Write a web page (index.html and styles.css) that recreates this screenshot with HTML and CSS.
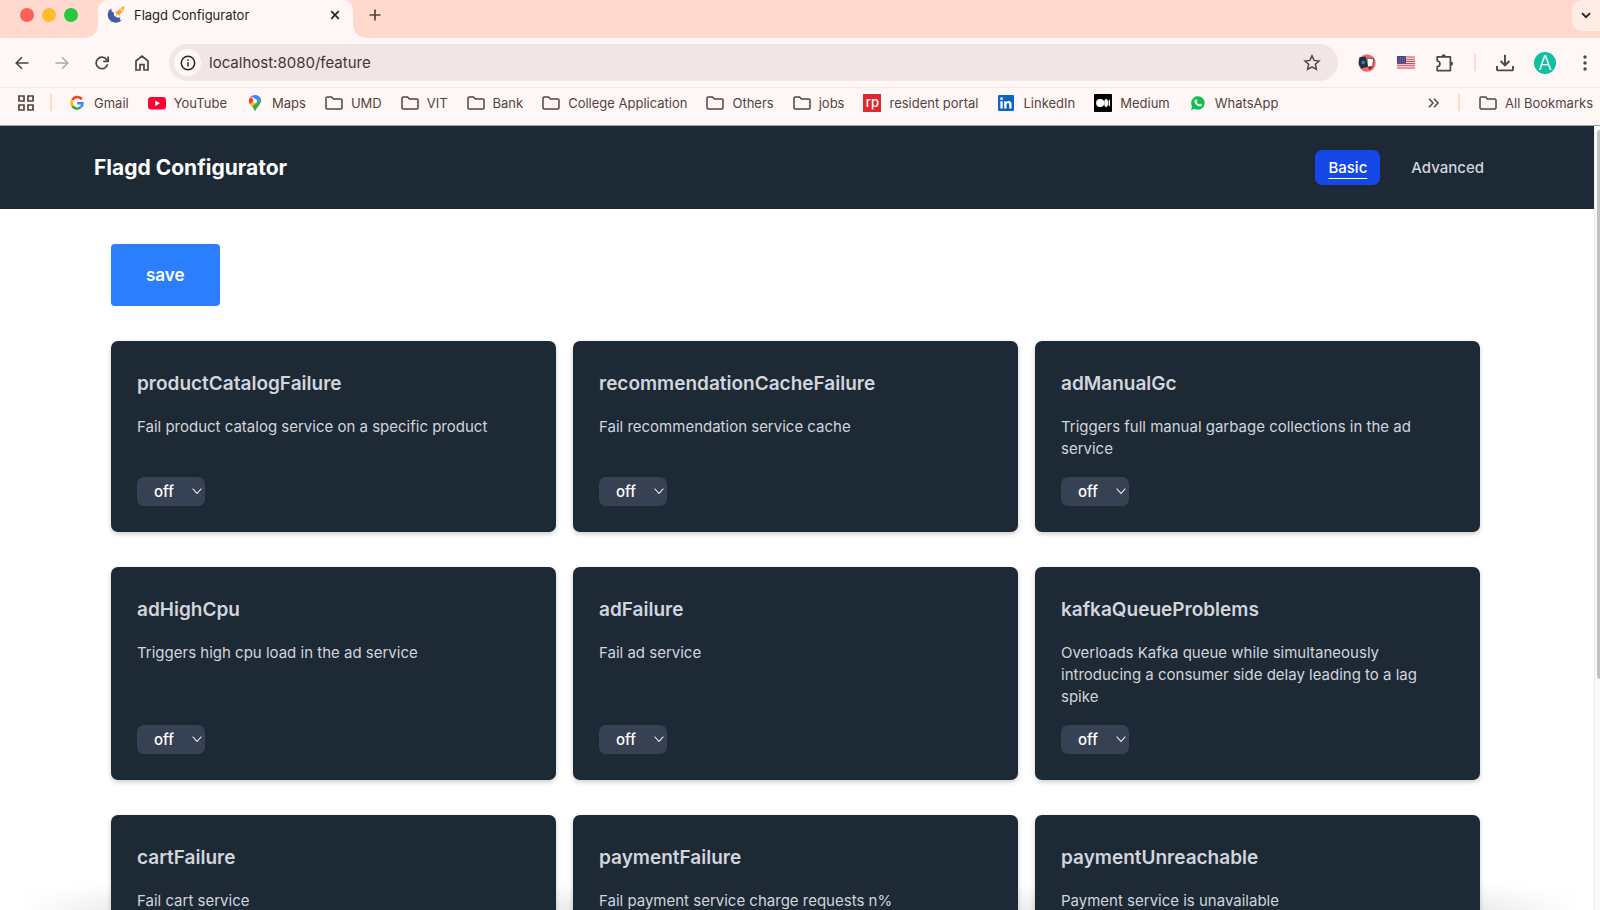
FILE: index.html
```html
<!DOCTYPE html>
<html lang="en">
<head>
<meta charset="utf-8">
<title>Flagd Configurator</title>
<link rel="stylesheet" href="styles.css">
</head>
<body>
<svg class="defs" aria-hidden="true">
  <symbol id="folder" viewBox="0 0 18 14"><path d="M1 2.2Q1 1 2.2 1H6.6L8.4 2.9H15.8Q17 2.9 17 4.1V11.8Q17 13 15.8 13H2.2Q1 13 1 11.8Z" fill="none" stroke="currentColor" stroke-width="1.5" stroke-linejoin="round"/></symbol>
  <symbol id="chevron" viewBox="0 0 10 7"><path d="M1 1L5 5.5L9 1" fill="none" stroke="currentColor" stroke-width="1.1" stroke-linecap="round" stroke-linejoin="round"/></symbol>
</svg>

<div class="tabstrip">
  <div class="lights"><span class="light red"></span><span class="light yellow"></span><span class="light green"></span></div>
  <div class="tab">
    <svg class="favicon" viewBox="0 0 18 18"><path d="M4.2 2.2A8 8 0 1 0 15.2 13.5L12.8 14.2L13.2 11.3L10.5 11.8L7.2 9.8L6.6 6.3L4.6 5.6Z" fill="#4459a8"/><path d="M3 17L7 11L8.3 12.4Z" fill="#4459a8"/><path d="M8.2 6.6L12 3.8Q14 1.2 17.6.3Q17.3 3.9 14.6 6.2L12.2 10L10.9 8.3L8.8 10.2L9.5 7.4Z" fill="#f9a52b"/><circle cx="14.4" cy="3.7" r="1.1" fill="#ffe1a6"/></svg>
    <span class="tab-title">Flagd Configurator</span>
    <button class="icon-btn" aria-label="Close tab"><svg width="10" height="10" viewBox="0 0 10 10"><path d="M1.2 1.2L8.8 8.8M8.8 1.2L1.2 8.8" stroke="#2b2020" stroke-width="1.7"/></svg></button>
  </div>
  <button class="icon-btn new-tab" aria-label="New tab"><svg width="12" height="12" viewBox="0 0 12 12"><path d="M6 .5V11.5M.5 6H11.5" stroke="#54433f" stroke-width="1.7"/></svg></button>
  <button class="icon-btn tab-search" aria-label="Search tabs"><svg width="10" height="7" viewBox="0 0 10 7"><path d="M1 1.2L5 5.2L9 1.2" fill="none" stroke="#2b2020" stroke-width="1.9"/></svg></button>
</div>

<div class="toolbar">
  <div class="nav-btns">
    <button class="icon-btn" aria-label="Back"><svg width="14" height="14" viewBox="0 0 14 14"><path d="M13.5 7H1.5M7 1.2L1.2 7L7 12.8" fill="none" stroke="#54433f" stroke-width="1.6"/></svg></button>
    <button class="icon-btn" aria-label="Forward"><svg width="14" height="14" viewBox="0 0 14 14"><path d="M.5 7H12.5M7 1.2L12.8 7L7 12.8" fill="none" stroke="#b3a9a6" stroke-width="1.6"/></svg></button>
    <button class="icon-btn" aria-label="Reload"><svg width="14" height="14" viewBox="0 0 14 14"><path d="M12.6 8.3A5.8 5.8 0 1 1 11.6 3.4L13 5" fill="none" stroke="#54433f" stroke-width="1.7"/><path d="M13.2 .4V5.4H8.2" fill="none" stroke="#54433f" stroke-width="1.7"/></svg></button>
    <button class="icon-btn" aria-label="Home"><svg width="14" height="16" viewBox="0 0 14 16"><path d="M1 6L7 1.2L13 6V15H9V9.6H5V15H1Z" fill="none" stroke="#54433f" stroke-width="1.7"/></svg></button>
  </div>
  <div class="address">
    <button class="site-info" aria-label="Site information"><svg width="16" height="16" viewBox="0 0 16 16"><circle cx="8" cy="8" r="6.7" fill="none" stroke="#2f2523" stroke-width="1.5"/><path d="M8 7.2V11.5M8 4.4V5.9" stroke="#2f2523" stroke-width="1.5"/></svg></button>
    <input class="url" type="text" aria-label="Address" value="localhost:8080/feature">
    <button class="icon-btn" aria-label="Bookmark this page"><svg width="18" height="17" viewBox="0 0 18 17"><path d="M9 1.8L11.1 6.4L16.1 7L12.4 10.3L13.4 15.3L9 12.8L4.6 15.3L5.6 10.3L1.9 7L6.9 6.4Z" fill="none" stroke="#54433f" stroke-width="1.5"/></svg></button>
  </div>
  <div class="extensions">
    <button class="icon-btn" aria-label="Extension"><svg width="18" height="18" viewBox="0 0 18 18"><circle cx="9" cy="9" r="8.7" fill="#ee6b66"/><path d="M9 4L15.6 4.8L14.6 12.8L9.4 13Z" fill="#fff" stroke="#453436" stroke-width=".8"/><path d="M1.4 3.3L7.6 2.6L9.8 12.8L3.2 14.4L.8 10Z" fill="#1d2e45"/><circle cx="5.2" cy="8.4" r="1.8" fill="#52769a"/><path d="M10 13L14 12L13.4 14.8L11 16Z" fill="#8e2d35"/></svg></button>
    <button class="icon-btn" aria-label="US flag extension"><svg width="18" height="14" viewBox="0 0 18 14"><rect width="18" height="14" rx="1.5" fill="#f8eef0"/><path d="M0 1H18M0 3.2H18M0 5.4H18M0 7.6H18M0 9.8H18M0 12H18" stroke="#c74958" stroke-width="1.1"/><rect width="9" height="7.6" rx="1" fill="#40437d"/><path d="M1.5 1.8H8M1.5 3.8H8M1.5 5.8H8" stroke="#a9aac9" stroke-width=".8" stroke-dasharray=".8 1"/></svg></button>
    <button class="icon-btn" aria-label="Extensions"><svg width="18" height="18" viewBox="0 0 18 18"><path d="M1.2 2.8H14.4V16.6H1.2V12.6C4.9 12.4 4.9 7.2 1.2 7Z" fill="none" stroke="#54433f" stroke-width="1.7" stroke-linejoin="round"/><path d="M5.6 2.4A2.1 2.1 0 0 1 9.8 2.4ZM14.8 7.4A2.2 2.2 0 0 1 14.8 11.8Z" fill="#54433f"/></svg></button>
    <span class="sep"></span>
    <button class="icon-btn" aria-label="Downloads"><svg width="18" height="18" viewBox="0 0 18 18"><path d="M9 .8V11M4.6 7L9 11.4L13.4 7M1 12V15.4Q1 16.4 2 16.4H16Q17 16.4 17 15.4V12" fill="none" stroke="#54433f" stroke-width="1.9"/></svg></button>
    <button class="avatar" aria-label="Profile">A</button>
    <button class="icon-btn" aria-label="Menu"><svg width="4" height="16" viewBox="0 0 4 16" fill="#54433f"><circle cx="2" cy="2" r="1.7"/><circle cx="2" cy="8" r="1.7"/><circle cx="2" cy="14" r="1.7"/></svg></button>
  </div>
</div>

<nav class="bookmarks" aria-label="Bookmarks">
  <button class="icon-btn" aria-label="Apps"><svg width="16" height="16" viewBox="0 0 16 16" fill="none" stroke="#54433f" stroke-width="1.7"><path d="M1 1H6V6H1ZM10 1H15V6H10ZM1 10H6V15H1ZM10 10H15V15H10Z"/></svg></button>
  <span class="sep apps-sep"></span>
  <a class="bm" href="#"><svg class="bm-icon" viewBox="0 0 18 18" fill="none" stroke-width="2.5"><path d="M13.8 5.3A5.5 5.5 0 0 0 4.4 6" stroke="#ea4335"/><path d="M4.4 6A5.5 5.5 0 0 0 4.4 12" stroke="#fbbc05"/><path d="M4.4 12A5.5 5.5 0 0 0 12.8 13.2" stroke="#34a853"/><path d="M12.8 13.2A5.4 5.4 0 0 0 14.5 9.2H9.2" stroke="#4285f4"/></svg>Gmail</a>
  <a class="bm" href="#"><svg class="bm-icon" viewBox="0 0 18 18"><rect y="3" width="18" height="12.5" rx="3.2" fill="#f03"/><path d="M7.2 6.6L12 9.2L7.2 11.9Z" fill="#fff"/></svg>YouTube</a>
  <a class="bm" href="#"><svg class="bm-icon" viewBox="0 0 18 18"><path d="M9 1A6 6 0 0 1 14.8 5.2L4.4 3.1A6 6 0 0 1 9 1Z" fill="#4285f4"/><path d="M4.4 3.1L9 7L3.9 10.2A6 6 0 0 1 4.4 3.1Z" fill="#ea4335"/><path d="M3.9 10.2L12.5 2.2A6 6 0 0 1 14.8 5.2L6.4 13Z" fill="#fbbc04"/><path d="M14.8 5.2C16 10.2 11.2 11.8 9 17.4C8.5 15.8 7.6 14.3 6.2 12.8Z" fill="#34a853"/><path d="M12.5 2.2A6 6 0 0 1 14.8 5.2L10.7 8.5L8 5Z" fill="#4285f4"/><circle cx="9" cy="7" r="2" fill="#fff"/></svg>Maps</a>
  <a class="bm" href="#"><svg class="bm-icon"><use href="#folder"/></svg>UMD</a>
  <a class="bm" href="#"><svg class="bm-icon"><use href="#folder"/></svg>VIT</a>
  <a class="bm" href="#"><svg class="bm-icon"><use href="#folder"/></svg>Bank</a>
  <a class="bm" href="#"><svg class="bm-icon"><use href="#folder"/></svg>College Application</a>
  <a class="bm" href="#"><svg class="bm-icon"><use href="#folder"/></svg>Others</a>
  <a class="bm" href="#"><svg class="bm-icon"><use href="#folder"/></svg>jobs</a>
  <a class="bm" href="#"><span class="bm-icon rp">rp</span>resident portal</a>
  <a class="bm" href="#"><svg class="bm-icon" viewBox="0 0 18 18"><rect x="1" y="1" width="16" height="16" rx="1.2" fill="#0a66c2"/><path d="M3.4 7.2H5.7V14.5H3.4ZM7.2 7.2H9.4V8.2Q10.2 7 11.7 7Q14.5 7 14.5 10.2V14.5H12.2V10.7Q12.2 9 11 9Q9.5 9 9.5 10.8V14.5H7.2Z" fill="#fff"/><circle cx="4.55" cy="4.7" r="1.35" fill="#fff"/></svg>LinkedIn</a>
  <a class="bm" href="#"><svg class="bm-icon" viewBox="0 0 18 18"><rect width="18" height="18" rx="1" fill="#000"/><circle cx="6.2" cy="9" r="4.1" fill="#fff"/><ellipse cx="12.1" cy="9" rx="1.9" ry="3.9" fill="#fff"/><ellipse cx="15.3" cy="9" rx=".8" ry="3.4" fill="#fff"/></svg>Medium</a>
  <a class="bm" href="#"><svg class="bm-icon" viewBox="0 0 18 18"><path d="M2 16L3 12.4A6.8 6.8 0 1 1 5.7 15Z" fill="#14c04d"/><path d="M6.5 5.4L7.6 5.3L8.4 7.2L7.6 8.2Q8.5 9.9 10.3 10.6L11.2 9.6L13 10.5Q13 12.4 11.1 12.6Q8.8 12.4 7 10.4Q5.2 8.2 5.4 6.7Q5.6 5.8 6.5 5.4Z" fill="#fff"/></svg>WhatsApp</a>
  <button class="icon-btn more" aria-label="More bookmarks"><svg width="11" height="10" viewBox="0 0 11 10"><path d="M1 .8L5 5L1 9.2M6 .8L10 5L6 9.2" fill="none" stroke="#54433f" stroke-width="1.5"/></svg></button>
  <span class="sep"></span>
  <a class="bm" href="#"><svg class="bm-icon"><use href="#folder"/></svg>All Bookmarks</a>
</nav>

<div class="viewport">
  <div class="page">
    <header class="site-header">
      <h1 class="brand">Flagd Configurator</h1>
      <nav class="menu"><a class="menu-link active" href="#">Basic</a><a class="menu-link" href="#">Advanced</a></nav>
    </header>
    <main class="content">
      <button class="save">save</button>
      <div class="cards">
        <section class="card"><h2>productCatalogFailure</h2><p>Fail product catalog service on a specific product</p><div class="picker"><select aria-label="productCatalogFailure"><option>off</option><option>on</option></select><svg class="arrow"><use href="#chevron"/></svg></div></section>
        <section class="card"><h2>recommendationCacheFailure</h2><p>Fail recommendation service cache</p><div class="picker"><select aria-label="recommendationCacheFailure"><option>off</option><option>on</option></select><svg class="arrow"><use href="#chevron"/></svg></div></section>
        <section class="card"><h2>adManualGc</h2><p>Triggers full manual garbage collections in the ad service</p><div class="picker"><select aria-label="adManualGc"><option>off</option><option>on</option></select><svg class="arrow"><use href="#chevron"/></svg></div></section>
        <section class="card"><h2>adHighCpu</h2><p>Triggers high cpu load in the ad service</p><div class="picker"><select aria-label="adHighCpu"><option>off</option><option>on</option></select><svg class="arrow"><use href="#chevron"/></svg></div></section>
        <section class="card"><h2>adFailure</h2><p>Fail ad service</p><div class="picker"><select aria-label="adFailure"><option>off</option><option>on</option></select><svg class="arrow"><use href="#chevron"/></svg></div></section>
        <section class="card"><h2>kafkaQueueProblems</h2><p>Overloads Kafka queue while simultaneously introducing a consumer side delay leading to a lag spike</p><div class="picker"><select aria-label="kafkaQueueProblems"><option>off</option><option>on</option></select><svg class="arrow"><use href="#chevron"/></svg></div></section>
        <section class="card"><h2>cartFailure</h2><p>Fail cart service</p></section>
        <section class="card"><h2>paymentFailure</h2><p>Fail payment service charge requests n%</p></section>
        <section class="card"><h2>paymentUnreachable</h2><p>Payment service is unavailable</p></section>
      </div>
    </main>
  </div>
  <div class="scrollbar"><div class="thumb"></div></div>
</div>
</body>
</html>
```
FILE: styles.css
```css
* { box-sizing: border-box; }
body {
  margin: 0;
  height: 100vh;
  overflow: hidden;
  display: flex;
  flex-direction: column;
  font-family: Inter, "Liberation Sans", sans-serif;
  background: #fff7f5;
}
h1, h2, p { margin: 0; }
a { color: inherit; text-decoration: none; }
button { font: inherit; border: 0; padding: 0; background: none; cursor: pointer; }
svg { display: block; flex: none; }
.defs { position: absolute; width: 0; height: 0; }
.icon-btn { display: grid; place-items: center; flex: none; }

.tabstrip {
  display: flex;
  align-items: center;
  flex: none;
  height: 38px;
  background: #ffd9cd;
  padding-left: 20px;
}
.lights { display: flex; gap: 8px; padding-bottom: 8px; }
.light { width: 14px; height: 14px; border-radius: 50%; }
.red { background: #fe5f57; }
.yellow { background: #febc2e; }
.green { background: #28c840; }
.tab {
  position: relative;
  align-self: stretch;
  display: flex;
  align-items: center;
  gap: 9px;
  width: 255px;
  margin-left: 20px;
  padding: 0 13px 8px 9px;
  border-radius: 10px 10px 0 0;
  background: #fff7f5;
}
.tab::before, .tab::after {
  content: "";
  position: absolute;
  bottom: 0;
  width: 12px;
  height: 12px;
}
.tab::before { left: -12px; background: radial-gradient(circle at 0 0, transparent 11px, #fff7f5 12px); }
.tab::after { right: -12px; background: radial-gradient(circle at 100% 0, transparent 11px, #fff7f5 12px); }
.favicon { width: 18px; height: 18px; }
.tab-title { flex: 1; font-size: 13px; color: #2b2020; }
.new-tab { margin-left: 16px; padding-bottom: 8px; }
.tab-search {
  align-self: flex-start;
  width: 28px;
  height: 31px;
  margin-left: auto;
  border-radius: 10px 0 0 10px;
  background: #ffece5;
}

.toolbar {
  display: flex;
  align-items: center;
  flex: none;
  height: 50px;
  padding: 0 5px 0 15px;
  border-bottom: 1px solid #f7e8e6;
}
.nav-btns { display: flex; align-items: center; gap: 26px; }
.address {
  flex: 1;
  display: flex;
  align-items: center;
  height: 37px;
  margin-left: 20px;
  padding: 0 17px 0 5px;
  border-radius: 19px;
  background: #f2e5e5;
}
.site-info {
  display: grid;
  place-items: center;
  width: 27px;
  height: 27px;
  border-radius: 50%;
  background: #fff7f5;
}
.url {
  flex: 1;
  min-width: 0;
  margin-left: 8px;
  padding: 0;
  border: 0;
  outline: 0;
  background: none;
  font: 15px Inter, "Liberation Sans", sans-serif;
  color: #423635;
}
.extensions { display: flex; align-items: center; gap: 19px; margin-left: 19px; }
.extensions .icon-btn { width: 20px; }
.sep { width: 2px; height: 17px; background: #ffdbd0; }
.avatar {
  width: 22px;
  height: 22px;
  border-radius: 50%;
  background: #0fbfa0;
  color: #fff;
  font-size: 20px;
  font-weight: 300;
  line-height: 22px;
}

.bookmarks {
  display: flex;
  align-items: center;
  flex: none;
  gap: 19px;
  height: 38px;
  padding: 0 7px 8px 18px;
  border-bottom: 1px solid #a59c9c;
  font-size: 13px;
  color: #54433f;
  white-space: nowrap;
}
.apps-sep { margin: 0 -3px; }
.bm { display: flex; align-items: center; gap: 8px; }
.bm-icon { width: 18px; height: 18px; flex: none; }
svg.bm-icon:has(use) { height: 14px; }
.rp {
  background: #e2262d;
  color: #fff;
  font-size: 13px;
  font-weight: 500;
  line-height: 16px;
  text-align: center;
}
.more { margin-left: auto; }

.viewport {
  flex: 1;
  min-height: 0;
  display: flex;
  background:
    linear-gradient(90deg, #fff 20px, transparent 120px, transparent calc(100% - 120px), #fff calc(100% - 20px)),
    linear-gradient(to top, #ebebeb, #fff 26px);
}
.page { flex: 1; min-width: 0; overflow: hidden; }
.site-header {
  display: flex;
  align-items: center;
  justify-content: space-between;
  height: 83px;
  padding: 0 97px 0 94px;
  background: #1e2936;
}
.brand { font-size: 21px; font-weight: 700; color: #fff; }
.menu { display: flex; gap: 18px; }
.menu-link {
  padding: 0 13px;
  border-radius: 7px;
  font-size: 15px;
  font-weight: 500;
  line-height: 35px;
  color: #d1d5dc;
}
.active {
  background: #1447e6;
  color: #fff;
  text-decoration: underline;
  text-decoration-thickness: 1px;
  text-underline-offset: 5px;
}
.content { padding: 35px 114px 0 111px; }
.save {
  height: 62px;
  padding: 0 35px;
  border-radius: 4px;
  background: #2b7fff;
  color: #fff;
  font-size: 17px;
  font-weight: 600;
}
.cards {
  display: grid;
  grid-template-columns: repeat(3, 1fr);
  gap: 35px 17px;
  margin-top: 35px;
}
.card {
  display: flex;
  flex-direction: column;
  align-items: flex-start;
  padding: 27px 26px 26px;
  border-radius: 7px;
  background: #1e2936;
  color: #d1d5dc;
  box-shadow: 0 2px 5px rgba(0, 0, 0, 0.2);
}
.card h2 { font-size: 19px; font-weight: 600; line-height: 31px; }
.card p { margin: 17px 0; font-size: 15px; line-height: 22px; }
.picker { position: relative; margin-top: auto; }
.picker select {
  display: block;
  appearance: none;
  width: 68px;
  height: 29px;
  padding: 0 0 0 17px;
  border: 0;
  border-radius: 7px;
  background: #364153;
  color: #fff;
  font: 500 15px Inter, "Liberation Sans", sans-serif;
}
.arrow {
  position: absolute;
  right: 3px;
  top: 11px;
  width: 10px;
  height: 7px;
  color: #fff;
  pointer-events: none;
}
.scrollbar { display: flex; justify-content: flex-end; width: 6px; background: #fafafa; border-left: 1px solid #ededed; overflow: hidden; }
.thumb { width: 3px; height: 70%; margin-top: 4px; border-radius: 3px 0 0 3px; background: #c1c1c1; }
```
